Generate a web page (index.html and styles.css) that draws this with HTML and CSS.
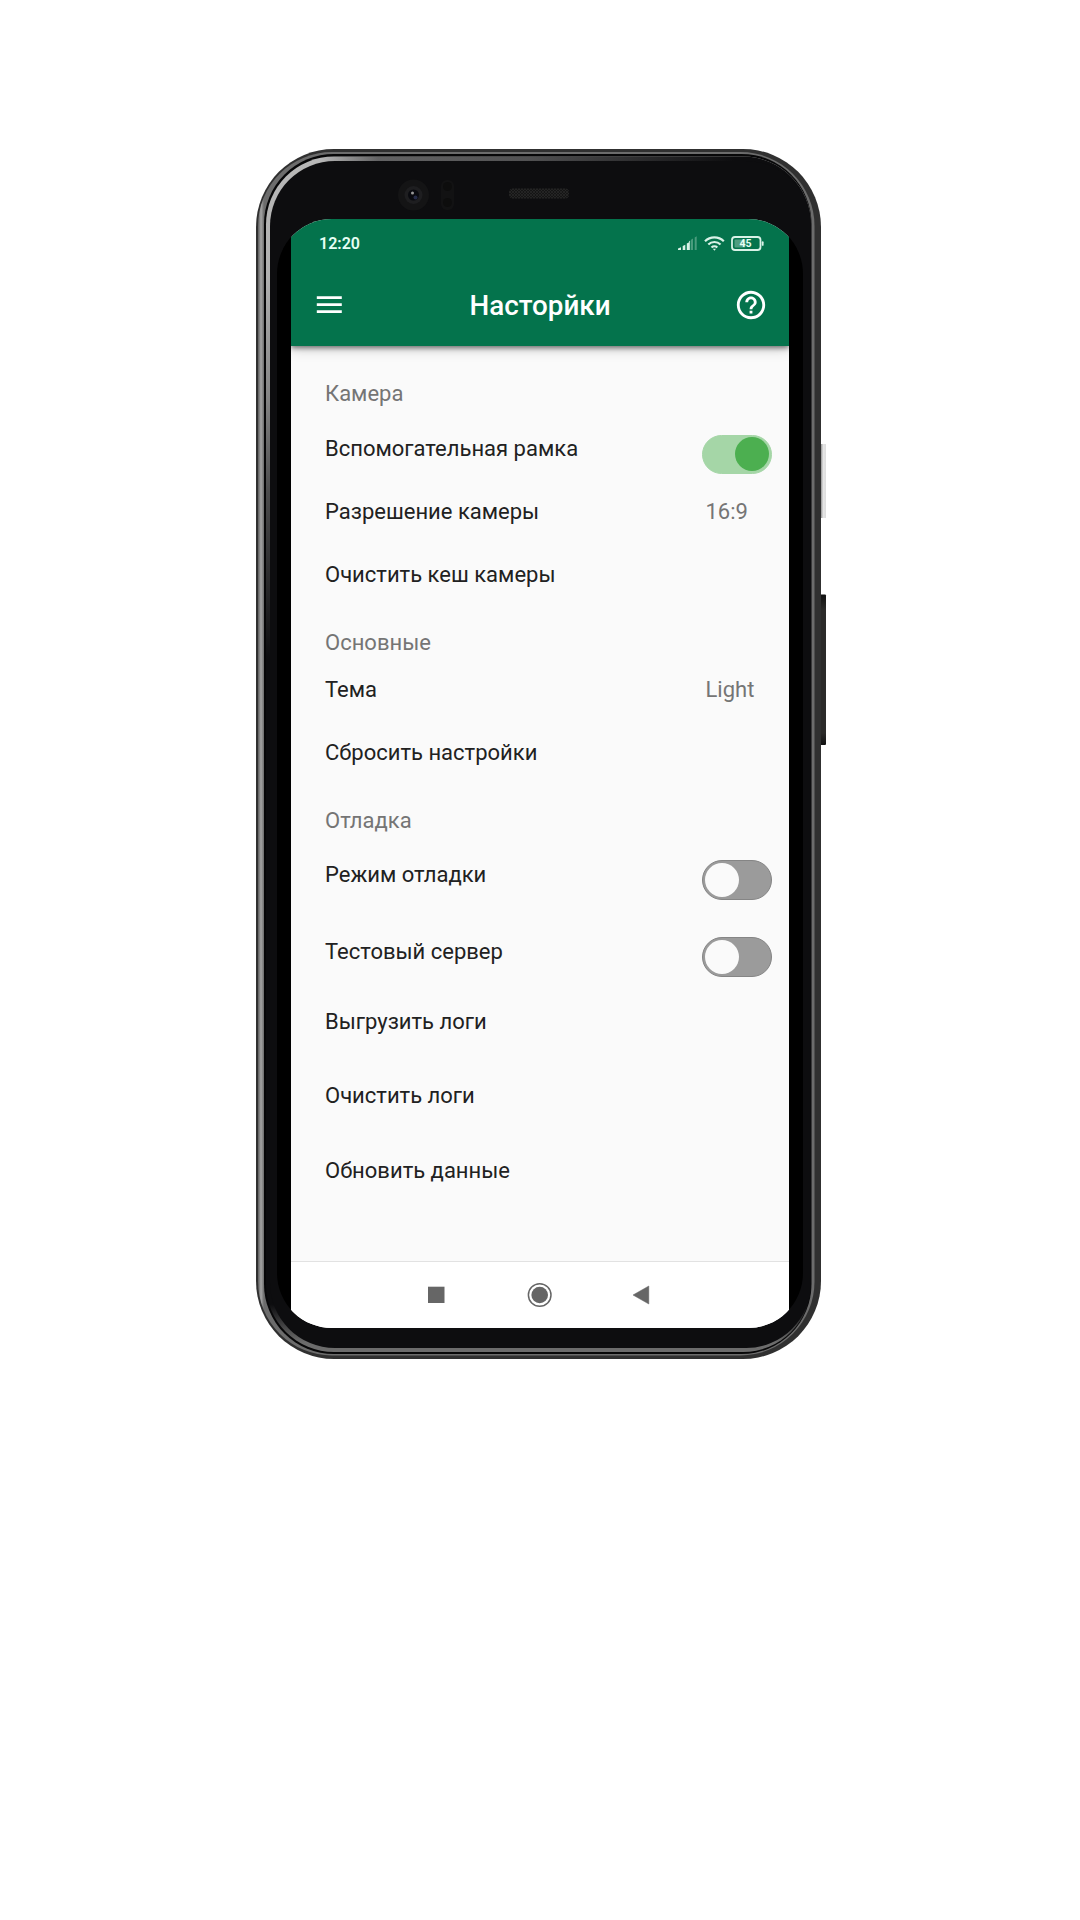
FILE: index.html
```html
<!DOCTYPE html>
<html lang="ru">
<head>
<meta charset="utf-8">
<title>Настройки</title>
<link rel="stylesheet" href="styles.css">
</head>
<body>
<main class="phone">
  <svg class="frame" width="571" height="1211" viewBox="256 149 571 1211" aria-hidden="true">
    <defs>
      <linearGradient id="rim" gradientUnits="userSpaceOnUse" x1="258" y1="0" x2="264" y2="0">
        <stop offset="0" stop-color="#5c5c5c"/><stop offset=".5" stop-color="#a6a6a6"/><stop offset="1" stop-color="#6c6c6c"/>
      </linearGradient>
      <linearGradient id="bevel" gradientUnits="userSpaceOnUse" x1="0" y1="157" x2="0" y2="1352">
        <stop offset="0" stop-color="#b8b8b8"/><stop offset=".1" stop-color="#b0b0b0"/><stop offset=".2" stop-color="#858585"/><stop offset=".28" stop-color="#4c4c4d"/><stop offset=".42" stop-color="#0d0d0f"/><stop offset=".96" stop-color="#0d0d0f"/><stop offset=".992" stop-color="#6c6c6c"/>
      </linearGradient>
      <linearGradient id="fade" gradientUnits="userSpaceOnUse" x1="320" y1="0" x2="735" y2="0">
        <stop offset="0" stop-color="#0d0d0f" stop-opacity="0"/><stop offset=".14" stop-color="#0d0d0f" stop-opacity=".5"/><stop offset=".5" stop-color="#0d0d0f" stop-opacity=".6"/><stop offset="1" stop-color="#0d0d0f"/>
      </linearGradient>
      <linearGradient id="power" x1="0" x2="1" y1="0" y2="0">
        <stop offset="0" stop-color="#777"/><stop offset=".3" stop-color="#999"/><stop offset=".6" stop-color="#e6e6e6"/><stop offset="1" stop-color="#ddd"/>
      </linearGradient>
      <linearGradient id="volume" x1="0" x2="0" y1="0" y2="1">
        <stop offset="0" stop-color="#111"/><stop offset=".1" stop-color="#2b2a29"/><stop offset=".92" stop-color="#2b2a29"/><stop offset="1" stop-color="#111"/>
      </linearGradient>
      <pattern id="mesh" width="3" height="3" patternUnits="userSpaceOnUse">
        <path d="M0 0L3 3M3 0L0 3" stroke="#2a2a2a" stroke-width=".7"/>
      </pattern>
    </defs>
    <rect x="819" y="444" width="7" height="74" fill="url(#power)"/>
    <rect x="817" y="594.500" width="9" height="150.500" rx="1" fill="url(#volume)"/>
    <rect x="256" y="149" width="565" height="1210" rx="78" fill="#303030"/>
    <rect x="258" y="152" width="556.500" height="1203.500" rx="74" fill="url(#rim)"/>
    <rect x="264" y="154" width="547.500" height="1200" rx="70" fill="#070708"/>
    <rect x="266" y="156.500" width="545" height="1195.500" rx="68" fill="url(#bevel)"/>
    <path d="M320 156.500H735V163H320Z" fill="url(#fade)"/>
    <path d="M735 156.500H743A68 68 0 0 1 811 224.500V665H735Z" fill="#0d0d0f"/>
    <rect x="270" y="161" width="541" height="1187" rx="65" fill="#0d0d0f"/>
    <circle cx="413.500" cy="195" r="15.500" fill="#141415"/>
    <circle cx="413.500" cy="195" r="9" fill="#1e1e20"/>
    <circle cx="413.500" cy="195" r="5.500" fill="#090a0f"/>
    <circle cx="412.500" cy="193" r="1.500" fill="#999"/>
    <circle cx="415.500" cy="197.500" r="2" fill="#252b48"/>
    <rect x="441" y="180" width="13" height="30" rx="6" fill="#121213"/>
    <circle cx="447.500" cy="186.500" r="4.500" fill="#0d0d0d"/>
    <circle cx="447.500" cy="202.500" r="4.500" fill="#0d0d0d"/>
    <rect x="509" y="188.500" width="60" height="10" rx="4" fill="#151515"/>
    <rect x="509" y="188.500" width="60" height="10" rx="4" fill="url(#mesh)"/>
  </svg>
  <section class="screen">
    <div class="app">
      <header class="top">
        <div class="status">
          <span class="clock">12:20</span>
          <svg class="indicators" width="88" height="16" viewBox="677 235 88 16" aria-label="Сеть, Wi-Fi, батарея">
            <path d="M678 248.500l3-1.200v2.700h-3zM682.700 246l2.600-1.200v5.200h-2.600zM686.800 243.500l2.400-1.200v7.700h-2.400z" fill="#d9f2e7"/>
            <path d="M689.200 241.500l.9-.9v9.400h-.9z" fill="#d9f2e7"/>
            <path d="M691 239.700l2-1.200v11.500h-2zM694.700 237.500l2-1.200v13.700h-2z" fill="#4a9c7d"/>
            <g fill="none" stroke="#d9f2e7" stroke-width="2.200">
              <path d="M705 241.300a13.400 13.400 0 0 1 18.800 0M708.300 244.500a8.700 8.700 0 0 1 12.200 0M711.500 247.500a4.300 4.300 0 0 1 5.800 0"/>
              <rect x="732" y="237" width="28.500" height="13" rx="3" stroke-width="1.800"/>
            </g>
            <path d="M712.800 248.800h3.200l-1.600 1.900z" fill="#d9f2e7"/>
            <rect x="734.500" y="239.500" width="11" height="8" rx="1" fill="#4f9d80"/>
            <rect x="761.800" y="241.300" width="1.800" height="4.500" rx=".9" fill="#d9f2e7"/>
            <text class="charge" x="745.500" y="247.300" text-anchor="middle">45</text>
          </svg>
        </div>
        <div class="toolbar">
          <svg width="26" height="18" viewBox="0 0 26 18" fill="#fff" aria-label="Меню"><path d="M.8.300h25v2.800H.8zM.8 7.200h25v2.800H.8zM.8 14.200h25v2.800H.8z"/></svg>
          <h1 class="title">Насторйки</h1>
          <svg width="34" height="34" viewBox="0 0 24 24" fill="#fff" aria-label="Помощь"><path d="M11 18h2v-2h-2v2zm1-16C6.480 2 2 6.480 2 12s4.480 10 10 10 10-4.480 10-10S17.520 2 12 2zm0 18c-4.410 0-8-3.590-8-8s3.590-8 8-8 8 3.590 8 8-3.590 8-8 8zm0-14c-2.210 0-4 1.790-4 4h2c0-1.100.9-2 2-2s2 .9 2 2c0 2-3 1.750-3 5h2c0-2.250 3-2.500 3-5 0-2.210-1.790-4-4-4z"/></svg>
        </div>
      </header>
      <div class="settings">
        <h2 class="row heading">Камера</h2>
        <div class="row medium"><span>Вспомогательная рамка</span><span class="toggle on"></span></div>
        <div class="row medium"><span>Разрешение камеры</span><span class="value">16:9</span></div>
        <div class="row last"><span>Очистить кеш камеры</span></div>
        <h2 class="row heading compact">Основные</h2>
        <div class="row medium"><span>Тема</span><span class="value">Light</span></div>
        <div class="row last"><span>Сбросить настройки</span></div>
        <h2 class="row heading">Отладка</h2>
        <div class="row debug"><span>Режим отладки</span><span class="toggle"></span></div>
        <div class="row server"><span>Тестовый сервер</span><span class="toggle"></span></div>
        <div class="row logs"><span>Выгрузить логи</span></div>
        <div class="row"><span>Очистить логи</span></div>
        <div class="row"><span>Обновить данные</span></div>
      </div>
      <nav class="nav">
        <svg width="498" height="66" viewBox="291 1262 498 66" fill="#666" aria-label="Навигация">
          <rect x="428" y="1286.700" width="16.500" height="16.300"/>
          <circle cx="539.700" cy="1295" r="11.300" fill="none" stroke="#666" stroke-width="1.500"/>
          <circle cx="539.700" cy="1295" r="8.300"/>
          <path d="M633 1295L648.800 1286V1304Z" stroke="#666" stroke-width=".5"/>
        </svg>
      </nav>
    </div>
  </section>
</main>
</body>
</html>
```
FILE: styles.css
```css
* { box-sizing: border-box; }
body {
  display: flow-root;
  margin: 0;
  min-height: 1920px;
  background: #fff;
  font-family: Roboto, "Noto Sans", sans-serif;
}
.phone {
  position: relative;
  display: flow-root;
  width: 565px;
  height: 1210px;
  margin: 149px 0 0 256px;
  padding: 70px 18px 31px 21px;
}
.frame { position: absolute; left: 0; top: 0; }
.screen {
  position: relative;
  height: 1109px;
  padding: 0 14px;
  background: #000;
  border-radius: 55px;
  overflow: hidden;
}
.app {
  height: 100%;
  display: flex;
  flex-direction: column;
  background: #fafafa;
}
.top {
  height: 127px;
  flex: none;
  color: #fff;
  background: #04734c;
  box-shadow: 0 2px 5px rgba(0, 0, 0, .5), 0 4px 12px rgba(0, 0, 0, .15);
}
.status {
  height: 48px;
  padding: 0 24.500px 0 28px;
  display: flex;
  align-items: center;
  justify-content: space-between;
}
.clock { font-size: 16px; font-weight: 600; color: #e6fff4; }
.charge { font: 700 10.500px Roboto, sans-serif; fill: #e6fff4; }
.toolbar {
  height: 75px;
  padding: 0 21px 0 25px;
  display: flex;
  align-items: center;
  justify-content: space-between;
}
.title { margin: 1px 0 0 4px; font-size: 27.800px; font-weight: 500; }
.settings { flex: 1; padding: 35px 17px 0 34px; }
.row {
  height: 75px;
  margin: 0;
  display: flex;
  justify-content: space-between;
  align-items: flex-start;
  font-size: 22px;
  font-weight: 400;
  line-height: 26px;
  color: #212121;
}
.heading { height: 55px; color: #757575; }
.compact { height: 47px; }
.medium { height: 63px; }
.last { height: 68px; }
.debug { height: 77px; }
.server { height: 70px; }
.logs { height: 74px; }
.value { width: 66.500px; color: #757575; }
.toggle {
  width: 70px;
  height: 40px;
  margin-top: -2px;
  padding: 2px;
  display: flex;
  background: #9b9b9b;
  border: 1px solid #858585;
  border-radius: 20px;
}
.toggle::before {
  content: "";
  width: 34px;
  height: 34px;
  background: #fafafa;
  border-radius: 50%;
}
.on {
  height: 39px;
  margin-top: -1.500px;
  padding: 1.500px 2px;
  justify-content: flex-end;
  background: #a5d6a7;
  border-color: #a5d6a7;
}
.on::before { background: #4caf50; }
.last + .heading:not(.compact) { height: 54px; }
.nav {
  height: 67px;
  flex: none;
  background: #fff;
  border-top: 1px solid #e2e2e2;
}
```
